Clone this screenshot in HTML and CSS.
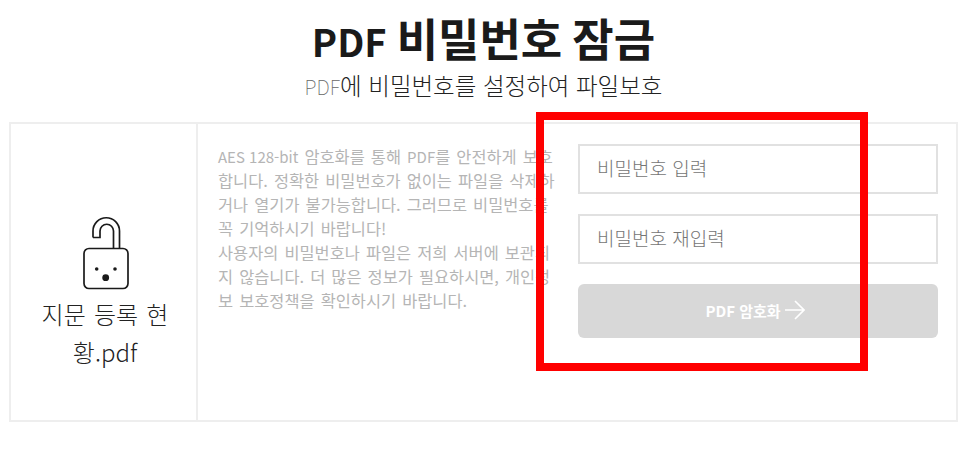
FILE: index.html
```html
<!DOCTYPE html>
<html lang="ko">
<head>
<meta charset="utf-8">
<title>PDF 비밀번호 잠금</title>
<link rel="stylesheet" href="styles.css">
</head>
<body>
<header class="head">
  <h1 class="title"><span class="title-lat">PDF</span> 비밀번호 잠금</h1>
  <p class="subtitle"><span class="sub-lat">PDF</span>에 비밀번호를 설정하여 파일보호</p>
</header>
<main class="card">
  <section class="file">
    <svg class="lock" width="52" height="76" viewBox="0 0 52 76" fill="none" stroke="#1a1a1a" stroke-width="1.700">
      <path d="M13 23.500V17A13.250 13.250 0 0 1 39.500 17V34.500M33.500 34.500V17A6.750 6.750 0 0 0 20 17V23.500H13"/>
      <rect x="4" y="34.500" width="44" height="40" rx="5"/>
      <circle cx="16.700" cy="55" r="1.800" fill="#1a1a1a" stroke="none"/>
      <circle cx="35" cy="55" r="1.800" fill="#1a1a1a" stroke="none"/>
      <circle cx="25.700" cy="63.700" r="3.400" fill="#1a1a1a" stroke="none"/>
    </svg>
    <p class="name">지문 등록 현황.pdf</p>
  </section>
  <section class="body">
    <p class="desc"><span class="desc-lat">AES 128-bit</span> 암호화를 통해 <span class="desc-lat">PDF</span>를 안전하게 보호합니다. 정확한 비밀번호가 없이는 파일을 삭제하거나 열기가 불가능합니다. 그러므로 비밀번호를 꼭 기억하시기 바랍니다!<br>사용자의 비밀번호나 파일은 저희 서버에 보관되지 않습니다. 더 많은 정보가 필요하시면, 개인정보 보호정책을 확인하시기 바랍니다.</p>
    <form class="form">
      <input class="field" type="password" placeholder="비밀번호 입력">
      <input class="field" type="password" placeholder="비밀번호 재입력">
      <button class="submit" type="button" disabled>
        <span>PDF 암호화</span>
        <svg width="20" height="20" viewBox="0 0 20 20" fill="none" stroke="#fff" stroke-width="1.600"><path d="M0 10H19M10 1L19 10L10 19"/></svg>
      </button>
    </form>
  </section>
</main>
<div class="mark"></div>
</body>
</html>
```
FILE: styles.css
```css
* { box-sizing: border-box; }
html, body { margin: 0; padding: 0; }
body {
  width: 962px;
  height: 451px;
  overflow: hidden;
  background: #fff;
  font-family: "Noto Sans CJK KR", "Noto Sans", sans-serif;
  position: relative;
}
.head { text-align: center; height: 122px; padding-top: 9px; padding-left: 5px; }
.title { margin: 0; font-size: 45px; line-height: 58px; font-weight: 700; color: #1a1a1a; word-spacing: -2.500px; }
.title-lat { font-size: 38px; }
.subtitle { margin: 0; font-size: 23.500px; line-height: 30px; font-weight: 300; color: #222; }
.sub-lat { font-size: 20px; font-weight: 100; color: #666; }
.card {
  display: flex;
  width: 949px;
  height: 300px;
  margin-left: 9px;
  border: 2px solid #eee;
}
.file {
  width: 187px;
  flex: none;
  border-right: 2px solid #eee;
  padding: 90px 24px 0 27px;
  display: flex;
  flex-direction: column;
  align-items: center;
}
.lock { display: block; flex: none; margin-left: 2px; }
.name {
  margin: 5px 0 0;
  font-size: 24px;
  line-height: 38px;
  font-weight: 300;
  color: #222;
  text-align: center;
  word-break: break-all;
  word-spacing: 1.500px;
}
.body { flex: 1; display: flex; padding: 20px 18px 0 20px; }
.desc {
  margin: 0;
  width: 340px;
  flex: none;
  font-size: 16.400px;
  line-height: 24px;
  color: #b5b5b5;
  word-break: break-all;
  word-spacing: 1.500px;
}
.desc-lat { font-size: 15px; word-spacing: 0; line-height: 1; }
.form { margin-left: 20px; width: 360px; display: flex; flex-direction: column; gap: 20px; }
.field {
  height: 50px;
  border: 2px solid #e1e1e1;
  padding: 0 17px 4px;
  font: 300 19px "Noto Sans CJK KR", sans-serif;
  outline: none;
  background: #fff;
}
.field::placeholder { color: #757575; opacity: 1; }
.submit {
  height: 54px;
  border: 0;
  border-radius: 6px;
  background: #d8d8d8;
  color: #fff;
  font: 700 15px "Noto Sans CJK KR", sans-serif;
  display: flex;
  align-items: center;
  justify-content: center;
  gap: 4px;
  padding: 0 6px 2px 0;
}
.mark {
  position: absolute;
  left: 536px;
  top: 112px;
  width: 332px;
  height: 259px;
  border: 8px solid #f00;
}
```
